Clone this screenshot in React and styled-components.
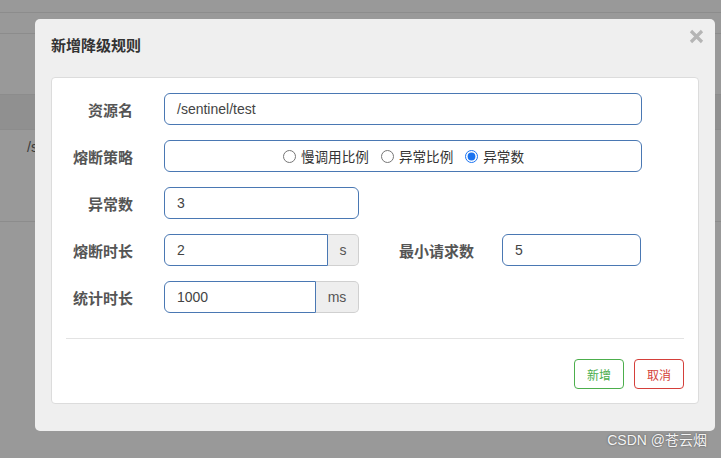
import React from "react";
import styled, { createGlobalStyle } from "styled-components";

const Global = createGlobalStyle`
  html, body { margin: 0; padding: 0; }
  body {
    background: #999999;
    font-family: "Liberation Sans", "Noto Sans CJK SC", sans-serif;
    width: 721px;
    height: 458px;
    overflow: hidden;
  }
`;

const Page = styled.div`
  position: relative;
  width: 721px;
  height: 458px;
  background: #999999;
  overflow: hidden;
`;

const Band = styled.div`
  height: ${(p) => p.$h}px;
  background: ${(p) => p.$bg || "transparent"};
  border-bottom: 1px solid #8c8c8c;
  box-sizing: content-box;
`;

const CellText = styled.div`
  padding: 7px 0 0 27px;
  font-size: 14px;
  line-height: 20px;
  color: #3a3a3a;
`;

const Modal = styled.div`
  position: absolute;
  left: 35px;
  top: 19px;
  width: 680px;
  height: 412px;
  box-sizing: border-box;
  background: #efefef;
  border-radius: 5px;
  padding: 0 16px 27px 16px;
  display: flex;
  flex-direction: column;
`;

const Header = styled.div`
  padding: 16px 0 22px 0;
`;

const Title = styled.h4`
  margin: 0;
  font-size: 15px;
  line-height: 20px;
  font-weight: bold;
  color: #333;
  font-family: "Noto Sans CJK SC", sans-serif;
`;

const Close = styled.button`
  position: absolute;
  top: 10px;
  right: 11px;
  width: 15px;
  height: 15px;
  padding: 0;
  border: 0;
  background: transparent;
  display: flex;
  align-items: center;
  justify-content: center;
  cursor: pointer;
`;

const Panel = styled.div`
  flex: 1;
  background: #fff;
  border: 1px solid #dcdcdc;
  border-radius: 4px;
  padding: 15px 14px 14px 14px;
  display: flex;
  flex-direction: column;
`;

const Row = styled.div`
  display: flex;
  align-items: center;
  height: 32px;
  margin-bottom: 15px;
`;

const Label = styled.label`
  width: ${(p) => p.$w}px;
  margin-left: ${(p) => p.$ml || 0}px;
  margin-right: ${(p) => p.$mr}px;
  text-align: right;
  font-size: 15px;
  font-weight: bold;
  color: #555;
  font-family: "Noto Sans CJK SC", sans-serif;
  white-space: nowrap;
`;

const Input = styled.div`
  width: ${(p) => p.$w}px;
  height: 32px;
  box-sizing: border-box;
  border: 1px solid #4a78b3;
  border-radius: ${(p) => (p.$addon ? "6px 0 0 6px" : "6px")};
  padding: 0 12px;
  display: flex;
  align-items: center;
  font-size: 14px;
  color: #444;
  background: #fff;
`;

const Addon = styled.div`
  width: ${(p) => p.$w}px;
  height: 32px;
  box-sizing: border-box;
  border: 1px solid #d0d0d0;
  border-left: 0;
  border-radius: 0 5px 5px 0;
  background: #eeeeee;
  display: flex;
  align-items: center;
  justify-content: center;
  font-size: 14px;
  color: #555;
`;

const InputGroup = styled.div`
  display: flex;
`;

const RadioBox = styled.div`
  width: 478px;
  height: 32px;
  box-sizing: border-box;
  border: 1px solid #4a78b3;
  border-radius: 6px;
  display: flex;
  align-items: center;
  justify-content: center;
  gap: 12px;
  padding-left: 1px;
`;

const RadioItem = styled.label`
  display: flex;
  align-items: center;
  gap: 5px;
  font-size: 13.6px;
  color: #333;
  font-family: "Noto Sans CJK SC", sans-serif;
`;

const Radio = styled.input`
  margin: 0;
  width: 13px;
  height: 13px;
  accent-color: #1a73f0;
`;

const Divider = styled.div`
  height: 1px;
  background: #e3e3e3;
  margin: 10px 0 20px 0;
`;

const Footer = styled.div`
  display: flex;
  justify-content: flex-end;
  gap: 10px;
`;

const Btn = styled.button`
  width: 50px;
  height: 30px;
  box-sizing: border-box;
  background: #fff;
  border: 1px solid ${(p) => p.$c};
  color: ${(p) => p.$c};
  border-radius: 4px;
  font-size: 12px;
  font-family: "Noto Sans CJK SC", sans-serif;
  padding: 0;
`;

const Watermark = styled.div`
  position: absolute;
  right: 14px;
  bottom: 9px;
  font-size: 14px;
  color: #f4f4f4;
  text-shadow: 0 0 2px rgba(0,0,0,0.5);
  font-family: "Liberation Sans", "Noto Sans CJK SC", sans-serif;
`;

export default function App() {
  return (
    <>
      <Global />
      <Page>
        <Band $h={12} />
        <Band $h={20} />
        <Band $h={60} $bg="#999999" />
        <Band $h={34} $bg="#909090" />
        <Band $h={91}>
          <CellText>/s</CellText>
        </Band>

        <Modal>
          <Header>
            <Title>新增降级规则</Title>
          </Header>
          <Close aria-label="close">
            <svg width="15" height="15" viewBox="0 0 15 15">
              <path d="M2 2 L13 13 M13 2 L2 13" stroke="#b5b5b5" strokeWidth="3.2" strokeLinecap="butt" />
            </svg>
          </Close>
          <Panel>
            <Row>
              <Label $w={67} $mr={31}>资源名</Label>
              <Input $w={478}>/sentinel/test</Input>
            </Row>
            <Row>
              <Label $w={67} $mr={31}>熔断策略</Label>
              <RadioBox>
                <RadioItem>
                  <Radio type="radio" name="grade" readOnly />
                  慢调用比例
                </RadioItem>
                <RadioItem>
                  <Radio type="radio" name="grade" readOnly />
                  异常比例
                </RadioItem>
                <RadioItem>
                  <Radio type="radio" name="grade" defaultChecked />
                  异常数
                </RadioItem>
              </RadioBox>
            </Row>
            <Row>
              <Label $w={67} $mr={31}>异常数</Label>
              <Input $w={195}>3</Input>
            </Row>
            <Row>
              <Label $w={67} $mr={31}>熔断时长</Label>
              <InputGroup>
                <Input $w={164} $addon>2</Input>
                <Addon $w={31}>s</Addon>
              </InputGroup>
              <Label $w={76} $ml={39} $mr={28}>最小请求数</Label>
              <Input $w={139}>5</Input>
            </Row>
            <Row>
              <Label $w={67} $mr={31}>统计时长</Label>
              <InputGroup>
                <Input $w={152} $addon>1000</Input>
                <Addon $w={43}>ms</Addon>
              </InputGroup>
            </Row>
            <Divider />
            <Footer>
              <Btn $c="#4cae4c">新增</Btn>
              <Btn $c="#d43f3a">取消</Btn>
            </Footer>
          </Panel>
        </Modal>
        <Watermark>CSDN @苍云烟</Watermark>
      </Page>
    </>
  );
}
